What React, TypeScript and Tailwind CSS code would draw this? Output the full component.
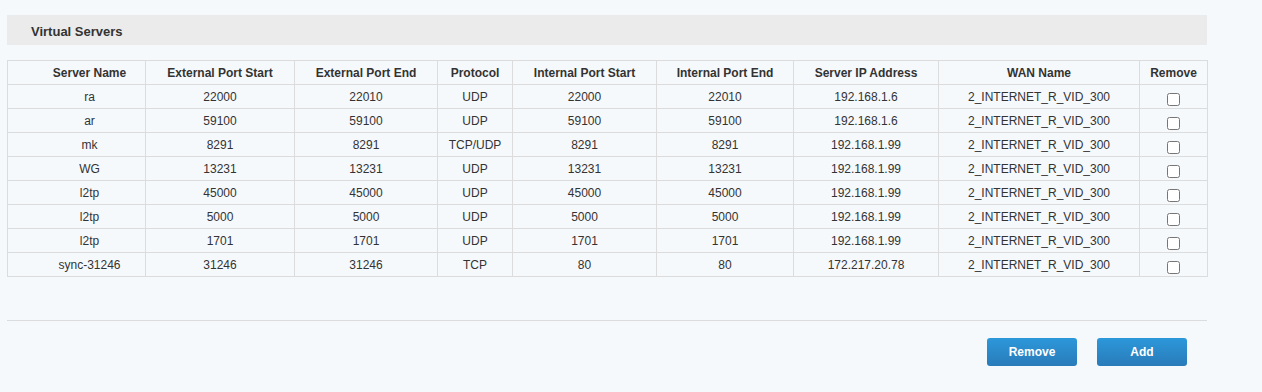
import React from "react";

type VirtualServer = {
  name: string;
  extStart: string;
  extEnd: string;
  protocol: string;
  intStart: string;
  intEnd: string;
  ip: string;
  wan: string;
};

const servers: VirtualServer[] = [
  { name: "ra", extStart: "22000", extEnd: "22010", protocol: "UDP", intStart: "22000", intEnd: "22010", ip: "192.168.1.6", wan: "2_INTERNET_R_VID_300" },
  { name: "ar", extStart: "59100", extEnd: "59100", protocol: "UDP", intStart: "59100", intEnd: "59100", ip: "192.168.1.6", wan: "2_INTERNET_R_VID_300" },
  { name: "mk", extStart: "8291", extEnd: "8291", protocol: "TCP/UDP", intStart: "8291", intEnd: "8291", ip: "192.168.1.99", wan: "2_INTERNET_R_VID_300" },
  { name: "WG", extStart: "13231", extEnd: "13231", protocol: "UDP", intStart: "13231", intEnd: "13231", ip: "192.168.1.99", wan: "2_INTERNET_R_VID_300" },
  { name: "l2tp", extStart: "45000", extEnd: "45000", protocol: "UDP", intStart: "45000", intEnd: "45000", ip: "192.168.1.99", wan: "2_INTERNET_R_VID_300" },
  { name: "l2tp", extStart: "5000", extEnd: "5000", protocol: "UDP", intStart: "5000", intEnd: "5000", ip: "192.168.1.99", wan: "2_INTERNET_R_VID_300" },
  { name: "l2tp", extStart: "1701", extEnd: "1701", protocol: "UDP", intStart: "1701", intEnd: "1701", ip: "192.168.1.99", wan: "2_INTERNET_R_VID_300" },
  { name: "sync-31246", extStart: "31246", extEnd: "31246", protocol: "TCP", intStart: "80", intEnd: "80", ip: "172.217.20.78", wan: "2_INTERNET_R_VID_300" },
];

const columns = [
  { label: "Server Name", w: "w-[138px]" },
  { label: "External Port Start", w: "w-[149px]" },
  { label: "External Port End", w: "w-[143px]" },
  { label: "Protocol", w: "w-[75px]" },
  { label: "Internal Port Start", w: "w-[144px]" },
  { label: "Internal Port End", w: "w-[137px]" },
  { label: "Server IP Address", w: "w-[145px]" },
  { label: "WAN Name", w: "w-[201px]" },
  { label: "Remove", w: "w-[68px]" },
];

const cell = "h-6 border border-[#dcdcdc] p-0 text-center align-middle";
// first column is indented a bit
const firstCell = "h-6 border border-[#dcdcdc] p-0 pl-[26px] text-center align-middle";

function ActionButton({ children }: { children: React.ReactNode }) {
  return (
    <button className="h-[28px] w-[90px] rounded-[3px] bg-gradient-to-b from-[#2c98da] to-[#297bb9] text-[12px] font-bold text-white">
      {children}
    </button>
  );
}

export default function App() {
  return (
    <div className="min-h-[392px] bg-[#f6f9fc] pt-[15px] font-['Liberation_Sans',Arial,sans-serif] text-[12px] text-[#333]">
      <div className="w-[1200px] ml-[7px]">
        {/* Section title */}
        <div className="flex h-[30px] items-center bg-[#ebebeb] pl-6 pt-[3px] text-[13px] font-bold text-[#333]">
          Virtual Servers
        </div>

        <table className="mt-[15px] w-[1200px] table-fixed border-collapse">
          <thead>
            <tr>
              {columns.map((c, i) => (
                <th key={c.label} className={`${i === 0 ? firstCell : cell} ${c.w} font-bold`}>
                  {c.label}
                </th>
              ))}
            </tr>
          </thead>
          <tbody>
            {servers.map((s, i) => (
              <tr key={i}>
                <td className={firstCell}>{s.name}</td>
                <td className={cell}>{s.extStart}</td>
                <td className={cell}>{s.extEnd}</td>
                <td className={cell}>{s.protocol}</td>
                <td className={cell}>{s.intStart}</td>
                <td className={cell}>{s.intEnd}</td>
                <td className={cell}>{s.ip}</td>
                <td className={cell}>{s.wan}</td>
                <td className={cell}>
                  <input type="checkbox" className="m-0 mt-[5px] h-[13px] w-[13px] align-top" />
                </td>
              </tr>
            ))}
          </tbody>
        </table>

        <div className="mt-[43px] border-t border-[#dcdcdc]" />

        <div className="mt-[17px] flex justify-end gap-5 pr-5">
          <ActionButton>Remove</ActionButton>
          <ActionButton>Add</ActionButton>
        </div>
      </div>
    </div>
  );
}
